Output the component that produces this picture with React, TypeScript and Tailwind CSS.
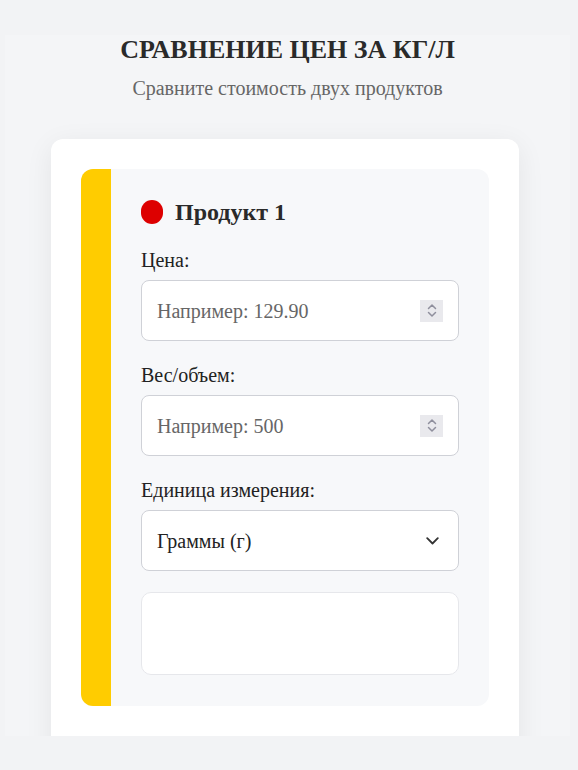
import React from "react";

const serif = { fontFamily: '"Liberation Serif", "Times New Roman", serif' };

function Spinner() {
  return (
    <div className="flex h-[22px] w-[23px] flex-col items-center justify-center bg-[#e9e9ed]">
      <svg width="12" height="17" viewBox="0 0 12 17" fill="none" stroke="#8f8f9d" strokeWidth="1.5" strokeLinecap="round" strokeLinejoin="round">
        <path d="M2.5 6.5 L6 3 L9.5 6.5" />
        <path d="M2.5 10.5 L6 14 L9.5 10.5" />
      </svg>
    </div>
  );
}

function NumberField({ label, placeholder }: { label: string; placeholder: string }) {
  return (
    <div className="flex flex-col">
      <label className="mb-[8px] text-[20px] leading-[23px] text-[#222]">{label}</label>
      <div className="flex h-[61px] items-center justify-between rounded-[8px] border border-[#cfd1d7] bg-white pl-[15px] pr-[15px]">
        <span className="text-[20px] text-[#666]">{placeholder}</span>
        <Spinner />
      </div>
    </div>
  );
}

export default function App() {
  return (
    <div className="min-h-[770px] bg-[#f2f3f5] pt-[35px]" style={serif}>
      <div className="ml-[5px] h-[701px] w-[565px] overflow-hidden bg-[#f4f5f7]">
        <header className="flex flex-col items-center pb-[40px]">
          <h1 className="text-[26px] font-bold leading-[30px] text-[#2a2a2a]">СРАВНЕНИЕ ЦЕН ЗА КГ/Л</h1>
          <p className="mt-[12px] text-[20px] leading-[22px] text-[#666]">Сравните стоимость двух продуктов</p>
        </header>
        <div className="ml-[46px] w-[468px] rounded-[12px] bg-white px-[30px] pb-[60px] pt-[30px] shadow-[0_6px_28px_rgba(0,0,0,0.07)]">
          <div className="flex overflow-hidden rounded-[12px] bg-[#f7f8fa]">
            <div className="w-[30px] shrink-0 bg-[#ffcc00]" />
            <div className="flex flex-1 flex-col px-[30px] pb-[31px] pt-[31px]">
              <div className="flex h-[24px] items-center gap-[12px]">
                <span className="h-[24px] w-[22px] shrink-0 rounded-full bg-[#dd0000]" />
                <h2 className="text-[24px] font-bold leading-[26px] text-[#2a2a2a]">Продукт 1</h2>
              </div>
              <div className="mt-[25px] flex flex-col gap-[23px]">
                <NumberField label="Цена:" placeholder="Например: 129.90" />
                <NumberField label="Вес/объем:" placeholder="Например: 500" />
                <div className="flex flex-col">
                  <label className="mb-[8px] text-[20px] leading-[23px] text-[#222]">Единица измерения:</label>
                  <div className="flex h-[61px] items-center justify-between rounded-[8px] border border-[#cfd1d7] bg-white pl-[15px] pr-[19px]">
                    <span className="text-[20px] text-[#222]">Граммы (г)</span>
                    <svg width="13" height="8" viewBox="0 0 13 8" fill="none" stroke="#333" strokeWidth="1.8" strokeLinecap="round" strokeLinejoin="round">
                      <path d="M1.2 1.2 L6.5 6.5 L11.8 1.2" />
                    </svg>
                  </div>
                </div>
              </div>
              <div className="mt-[21px] h-[83px] rounded-[10px] border border-[#e6e7eb] bg-white" />
            </div>
          </div>
        </div>
      </div>
    </div>
  );
}
